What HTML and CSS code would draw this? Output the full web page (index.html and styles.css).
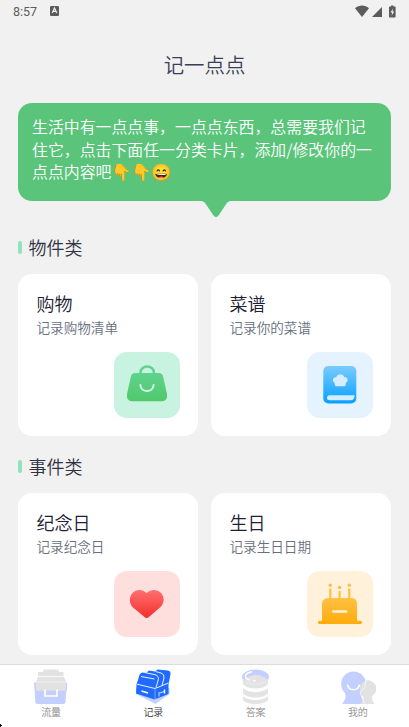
FILE: index.html
```
<!DOCTYPE html>
<html lang="zh-CN">
<head>
<meta charset="utf-8">
<title>记一点点</title>
<link rel="stylesheet" href="styles.css">
</head>
<body>
<div class="screen">
  <div class="status">
    <span class="time">8:57</span>
    <svg class="keyboard" width="9" height="10" viewBox="0 0 9 10"><rect width="9" height="10" rx="1.3" fill="#5c5c5c"/><path d="M2.2 7 4.5 1.9 6.8 7M3.2 5.4h2.6" fill="none" stroke="#f1f1f1" stroke-width="1.2"/></svg>
    <svg class="signals" width="42" height="13" viewBox="0 0 42 13"><g fill="#5c5c5c"><path d="M0 3.2C4-.3 10-.3 14 3.2L7 12z"/><path d="M27 2v10H17z"/><path d="M36 .5h2.500v1H40q.6 0 .6.6v9.700q0 .7-.7.7h-5.200q-.7 0-.7-.7V2.100q0-.6.6-.6H36z"/></g><path d="M38 3.500 35.500 7.500h1.600l-.5 3.200L39.200 6.500h-1.600z" fill="#f1f1f1"/></svg>
  </div>
  <h1>记一点点</h1>
  <div class="bubble">
    <p>生活中有一点点事，一点点东西，总需要我们记<br>住它，点击下面任一分类卡片，添加/修改你的一<br>点点内容吧<span class="emoji">👇👇😄</span></p>
    <svg class="tail" width="32" height="17" viewBox="0 0 32 17"><path d="M0 0C4 0 5 2 6.500 4L13.500 14.500Q16 17.500 18.500 14.500L25.500 4C27 2 28 0 32 0z" fill="#5ac47a"/></svg>
  </div>
  <h2>物件类</h2>
  <div class="cards">
    <section class="card">
      <h3>购物</h3><p>记录购物清单</p>
      <div class="tile mint">
        <svg width="66" height="66" viewBox="0 0 66 66"><defs><linearGradient id="g1" x2="0" y2="1"><stop stop-color="#5fd38d"/><stop offset="1" stop-color="#50c96d"/></linearGradient></defs><path d="M26.500 23v-2.500a6.700 6 0 0 1 13.400 0V23" fill="none" stroke="#5fd38d" stroke-width="2.400"/><path d="M21 21h24q3 0 4 3l4 18q1 7-5 7.200H18q-6-.2-5-7.200l4-18q1-3 4-3z" fill="url(#g1)"/><path d="M26.400 33c.5 8 12.700 8 13.200 0" fill="none" stroke="#d1f5e4" stroke-width="2" stroke-linecap="round"/></svg>
      </div>
    </section>
    <section class="card">
      <h3>菜谱</h3><p>记录你的菜谱</p>
      <div class="tile sky">
        <svg width="66" height="66" viewBox="0 0 66 66"><defs><linearGradient id="g2" x2="0" y2="1"><stop stop-color="#79cbff"/><stop offset="1" stop-color="#07a0ff"/></linearGradient></defs><rect x="16.300" y="14" width="33" height="37.500" rx="5" fill="url(#g2)"/><path d="M28 33.300 27.500 30.800C25 29 25.500 25.300 29.300 25c1.200-3.800 6.700-3.800 8 0 3.800.3 4.300 4 1.700 5.800L38.500 33.300q-.1.900-1 .9h-8.500q-.9 0-1-.9z" fill="#d5edff"/><path d="M22.500 43.200h25.200q-.2 5-4 5H22.500a2.500 2.500 0 0 1 0-5z" fill="#d5edff"/></svg>
      </div>
    </section>
  </div>
  <h2 class="second">事件类</h2>
  <div class="cards">
    <section class="card">
      <h3>纪念日</h3><p>记录纪念日</p>
      <div class="tile pink">
        <svg width="66" height="66" viewBox="0 0 66 66"><defs><linearGradient id="g3" x2="0" y2="1"><stop stop-color="#ff706f"/><stop offset="1" stop-color="#f2302d"/></linearGradient></defs><path d="M32.700 22.200C28.500 18 22.500 18 19 21.500c-4.500 4.500-4 11 0 15L30.500 46q2.200 1.800 4.400 0L46.500 36c4-4 4.300-10.500 0-14.500-3.600-3.500-9.600-3.500-13.800.7z" fill="url(#g3)"/></svg>
      </div>
    </section>
    <section class="card">
      <h3>生日</h3><p>记录生日日期</p>
      <div class="tile cream">
        <svg width="66" height="66" viewBox="0 0 66 66"><defs><linearGradient id="g4" x2="0" y2="1"><stop stop-color="#ffc044"/><stop offset="1" stop-color="#ffac0c"/></linearGradient></defs><g fill="#ffbf43"><circle cx="23.300" cy="14.300" r="1.700"/><circle cx="32.600" cy="16.500" r="1.700"/><circle cx="42.300" cy="14.300" r="1.700"/><path d="M22.200 17.500h2.200V28h-2.200zM31.500 20h2.200v8h-2.200zM41.200 17.500h2.200V28h-2.200z"/></g><path d="M21 27h24q5 .5 5 6v16.700h3.500a1.600 1.600 0 0 1 0 3.200h-41a1.600 1.600 0 0 1 0-3.200H15V33q.5-5.500 6-6z" fill="url(#g4)"/><path d="M26.300 40.500h12.800" stroke="#fff1da" stroke-width="2.400" stroke-linecap="round"/></svg>
      </div>
    </section>
  </div>
  <nav>
    <div class="tab"><svg width="36" height="36" viewBox="0 0 36 36"><path d="M1.500 18h32l-1 15q-.2 2-2 2H4.500q-2 0-2.200-2z" fill="#c3cfff"/><path d="M1 13.500h33V22H2z" fill="#c3cfff"/><path d="M11 .5h14l1 2.500h4.500v4H5V3h5zM5 8h26l2 5H3zM3 13h30v8.700H3z" fill="#e2e2e2"/><path d="M4.500 7.700h26M3 13h30" stroke="#f4f4f4" stroke-width=".8"/><path d="M12 20.500V27h12v-6.500" fill="none" stroke="#fff" stroke-width="1.700"/></svg><span>流量</span></div>
    <div class="tab active"><svg width="36" height="36" viewBox="0 0 36 36"><path d="M1 25 20.500 35 34.500 25V19H1z" fill="#c3d3ff"/><path d="M1.500 15.500 4.500 6Q5.300 3.700 7.500 3.500L11 4l3-2.500 6 1L22.500.5 33 1.500q3 .5 2.500 3.500L33.500 16v9l-14 5.500L1 24.500z" fill="#1f6bff"/><path d="M2 15.200 20 19.500 33.500 14M6 7.500 19.500 10M10.500 3.700 20 5.700q4 1 3.300 5L21 18.500M20.500 2.500 26 4q3.500 1 3 5L27 16.500" fill="none" stroke="#fff" stroke-width=".9"/><path d="M20 19.500v10.500" stroke="#8fb4ff" stroke-width=".8"/><path d="M6.500 22 13 24M29.500 20.500v4" fill="none" stroke="#fff" stroke-width="1.400"/><path d="M24 23v4.500M24.500 24l5-1.500" fill="none" stroke="#fff" stroke-width=".8"/></svg><span>记录</span></div>
    <div class="tab"><svg width="36" height="36" viewBox="0 0 36 36"><path d="M5 10h25v5c-4 6-21 6-25 0zM5 19c5 5.500 20 5.500 25 0v5c-4 6-21 6-25 0zM5 27c5 5.500 20 5.500 25 0v4c-4 5.500-21 5.500-25 0z" fill="#e3e3e3"/><ellipse cx="17.500" cy="8" rx="13.500" ry="7.500" fill="#c3cfff"/><path d="M6.500 10q11-8 22.500 0-2 5-11.500 5t-11-5z" fill="#e3e3e3"/><path d="M5 10c4 7 21 7 25 0" stroke="#f6f6f6" stroke-width=".7" fill="none"/><path d="M14 2.800C5.500 4.500 6 9.500 11.500 11M15.500 11.800h2" fill="none" stroke="#fff" stroke-width="1.400"/></svg><span>答案</span></div>
    <div class="tab"><svg width="36" height="36" viewBox="0 0 36 36"><path d="M2 35q5-6 3-11a12.400 12.400 0 1 1 17 0q-1 6 3 11z" fill="#c3cfff"/><path d="M20.500 35 24 28.500q-3-2-4-7a8.300 8.300 0 1 1 12 5.500q-.5 4 2.500 8z" fill="#e2e2e2"/><path d="M25.500 12q1 7-5.500 11.500L24.500 35" stroke="#f7f7ff" stroke-width=".8" fill="none"/><path d="M7.500 15.500c1 7 11 7 12 0" fill="none" stroke="#fff" stroke-width="1.600"/></svg><span>我的</span></div>
    <svg class="corner" width="3" height="3" viewBox="0 0 3 3"><path d="M0 0h1v1h1v1h-1v1H0z" fill="#111"/></svg>
  </nav>
</div>
</body>
</html>
```
FILE: styles.css
```
* { box-sizing: border-box; margin: 0; padding: 0; }
body {
  background: #f1f1f1;
  font-family: "Noto Sans CJK SC", sans-serif;
  font-weight: 350;
}
svg { display: block; }
.screen {
  width: 409px;
  height: 727px;
  display: flex;
  flex-direction: column;
  overflow: hidden;
}
.status {
  height: 22px;
  flex: none;
  display: flex;
  align-items: center;
  padding: 0 12px 0 13px;
  color: #5c5c5c;
}
.time { font: 12.500px/22px Roboto, sans-serif; width: 37px; padding-top: 1px; }
.signals { margin-left: auto; }
h1 {
  height: 81px;
  flex: none;
  line-height: 85px;
  text-align: center;
  font-size: 20.400px;
  font-weight: 350;
  color: #3a3f55;
}
.bubble {
  position: relative;
  flex: none;
  height: 98px;
  margin: 0 18px;
  padding: 13px 14px;
  border-radius: 14px;
  background: #5ac47a;
  color: #fff;
}
.bubble p { font-size: 15.900px; line-height: 22.700px; white-space: nowrap; }
.emoji {
  display: inline-block;
  font-family: "Noto Color Emoji", "Noto Sans CJK SC", sans-serif;
  font-size: 16.500px;
  letter-spacing: -.5px;
  line-height: 1;
}
.tail { position: absolute; left: 182px; top: 97.500px; }
h2 {
  flex: none;
  display: flex;
  align-items: center;
  gap: 6.500px;
  height: 26px;
  margin: 33px 18px 13.500px;
  font-size: 18px;
  line-height: 26px;
  font-weight: 350;
  color: #303143;
  padding-bottom: 1px;
}
h2::before {
  content: "";
  width: 4px;
  height: 13px;
  margin-top: 1px;
  border-radius: 2px;
  background: #8fe3bd;
}
h2.second { margin: 17.500px 18px 13px; }
.cards {
  flex: none;
  display: grid;
  grid-template-columns: 1fr 1fr;
  gap: 13px;
  margin: 0 18px;
}
.card {
  height: 162.500px;
  padding: 16px 18.500px 0;
  border-radius: 14px;
  background: #fff;
}
.card h3 {
  font-size: 18px;
  line-height: 26px;
  font-weight: 350;
  color: #202033;
}
.card p {
  font-size: 13.600px;
  line-height: 20px;
  color: #686f7d;
  padding-top: 1px;
  height: 21px;
}
.tile {
  width: 66px;
  height: 66px;
  margin: 15px 0 0 77px;
  border-radius: 13px;
}
.mint { background: #c8f3e0; }
.sky { background: #e4f3fe; }
.pink { background: #ffdede; }
.cream { background: #fff1da; }
nav {
  position: relative;
  flex: none;
  display: grid;
  grid-template-columns: repeat(4, 1fr);
  height: 63px;
  margin-top: 9px;
  border-top: 1px solid #dcdcdc;
  background: #fff;
}
.tab {
  display: flex;
  flex-direction: column;
  align-items: center;
  padding-top: 4px;
  font-size: 10px;
  line-height: 14px;
  color: #8b8b8b;
}
.active { color: #333; }
.corner { position: absolute; left: 0; bottom: 0; }
```
